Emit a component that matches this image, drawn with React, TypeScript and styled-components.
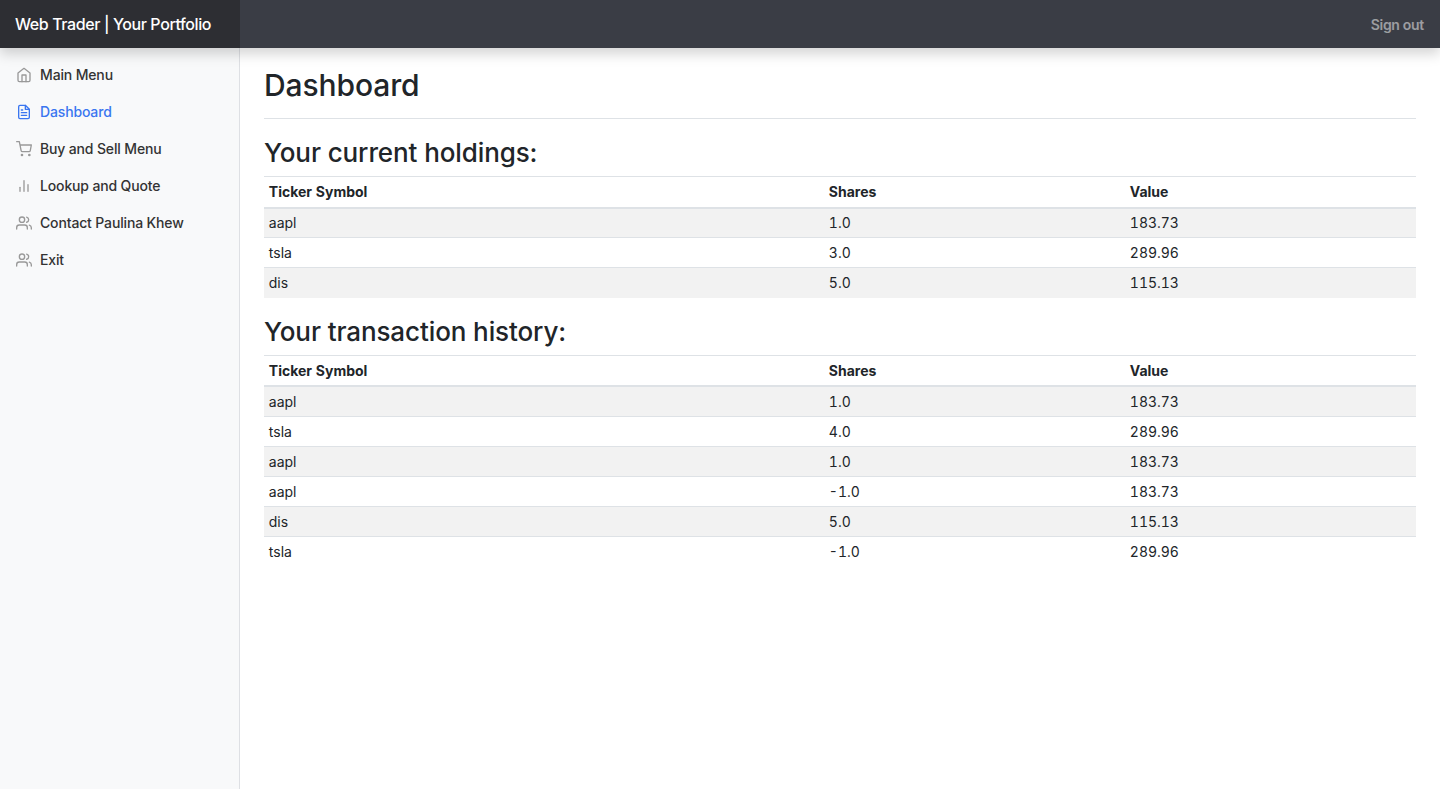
import styled, { createGlobalStyle } from 'styled-components';
import { FiBarChart2, FiFileText, FiHome, FiShoppingCart, FiUsers } from 'react-icons/fi';

const GlobalStyle = createGlobalStyle`
  * {
    box-sizing: border-box;
  }

  html,
  body {
    margin: 0;
    background: #fff;
    color: #212529;
    font-family: Inter, "Liberation Sans", sans-serif;
    font-size: 16px;
  }
`;

const Navbar = styled.header`
  position: relative;
  z-index: 2;
  display: flex;
  align-items: center;
  justify-content: space-between;
  height: 48px;
  background: #3a3d45;
  box-shadow: 0 6px 12px rgba(0, 0, 0, 0.17);
`;

const Brand = styled.a`
  display: flex;
  align-items: center;
  width: 240px;
  height: 100%;
  padding-left: 15px;
  background: #2d2e33;
  color: #fff;
  font-size: 16px;
  font-weight: 500;
  letter-spacing: -0.4px;
`;

const SignOut = styled.a`
  padding-right: 16px;
  color: rgba(255, 255, 255, 0.5);
  font-size: 14px;
  font-weight: 600;
  letter-spacing: -0.3px;
`;

const Body = styled.div`
  display: flex;
  min-height: 741px;
`;

const Sidebar = styled.nav`
  flex: 0 0 240px;
  padding-top: 8px;
  background: #f8f9fa;
  border-right: 1px solid #dee0e4;
`;

const NavItem = styled.a<{ $active?: boolean }>`
  display: flex;
  align-items: center;
  gap: 8px;
  height: 37px;
  padding-left: 16px;
  color: ${(p) => (p.$active ? '#3a76f0' : '#333')};
  font-size: 14px;
  font-weight: 500;
  letter-spacing: -0.15px;

  svg {
    flex: none;
    width: 16px;
    height: 16px;
    color: ${(p) => (p.$active ? '#3a76f0' : '#999')};
  }
`;

const Main = styled.main`
  flex: 1;
  padding: 17px 24px 0;
`;

const PageHeader = styled.div`
  height: 54px;
  margin-bottom: 16px;
  border-bottom: 1px solid #dee2e6;

  h1 {
    margin: 0;
    font-size: 30px;
    font-weight: 500;
    letter-spacing: -0.1px;
    line-height: 40px;
  }
`;

const SectionTitle = styled.h2`
  height: 41px;
  margin: 0;
  font-size: 26px;
  font-weight: 500;
  letter-spacing: -0.1px;
  line-height: 35px;
`;

const Table = styled.table`
  width: 100%;
  margin-bottom: 16px;
  border-collapse: collapse;
  table-layout: fixed;
  font-size: 14px;
  font-variant-numeric: tabular-nums;

  th,
  td {
    height: 30px;
    padding: 0 4.8px;
    text-align: left;
    vertical-align: middle;
    border-top: 1px solid #dee2e6;
  }

  th {
    height: 31px;
    font-weight: 700;
    border-bottom: 2px solid #dee2e6;
  }

  th:nth-child(1) {
    width: 560px;
  }

  th:nth-child(2) {
    width: 301px;
  }

  tbody tr:nth-child(odd) {
    background: rgba(0, 0, 0, 0.05);
  }
`;

type Row = { ticker: string; shares: string; value: string };

const holdings: Row[] = [
  { ticker: 'aapl', shares: '1.0', value: '183.73' },
  { ticker: 'tsla', shares: '3.0', value: '289.96' },
  { ticker: 'dis', shares: '5.0', value: '115.13' },
];

const history: Row[] = [
  { ticker: 'aapl', shares: '1.0', value: '183.73' },
  { ticker: 'tsla', shares: '4.0', value: '289.96' },
  { ticker: 'aapl', shares: '1.0', value: '183.73' },
  { ticker: 'aapl', shares: '-1.0', value: '183.73' },
  { ticker: 'dis', shares: '5.0', value: '115.13' },
  { ticker: 'tsla', shares: '-1.0', value: '289.96' },
];

const StockTable = ({ rows }: { rows: Row[] }) => (
  <Table>
    <thead>
      <tr>
        <th>Ticker Symbol</th>
        <th>Shares</th>
        <th>Value</th>
      </tr>
    </thead>
    <tbody>
      {rows.map((row, i) => (
        <tr key={i}>
          <td>{row.ticker}</td>
          <td>{row.shares}</td>
          <td>{row.value}</td>
        </tr>
      ))}
    </tbody>
  </Table>
);

const App = () => (
  <>
    <GlobalStyle />
    <Navbar>
      <Brand>Web Trader | Your Portfolio</Brand>
      <SignOut>Sign out</SignOut>
    </Navbar>
    <Body>
      <Sidebar>
        <NavItem><FiHome />Main Menu</NavItem>
        <NavItem $active><FiFileText />Dashboard</NavItem>
        <NavItem><FiShoppingCart />Buy and Sell Menu</NavItem>
        <NavItem><FiBarChart2 />Lookup and Quote</NavItem>
        <NavItem><FiUsers />Contact Paulina Khew</NavItem>
        <NavItem><FiUsers />Exit</NavItem>
      </Sidebar>
      <Main>
        <PageHeader>
          <h1>Dashboard</h1>
        </PageHeader>
        <SectionTitle>Your current holdings:</SectionTitle>
        <StockTable rows={holdings} />
        <SectionTitle>Your transaction history:</SectionTitle>
        <StockTable rows={history} />
      </Main>
    </Body>
  </>
);

export default App;
